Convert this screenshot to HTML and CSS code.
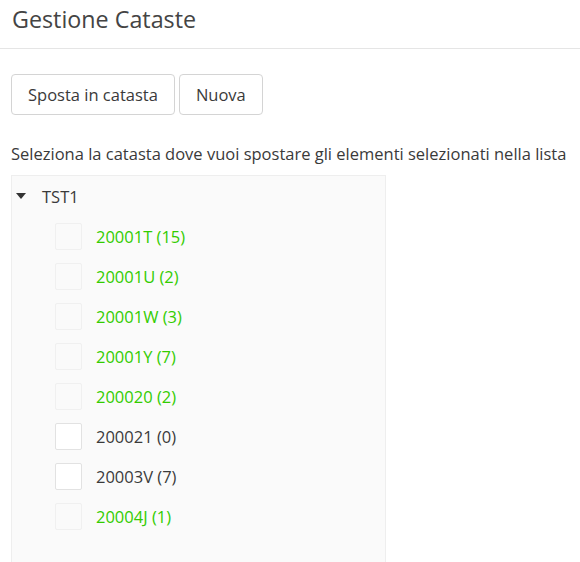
FILE: index.html
```html
<!DOCTYPE html>
<html lang="it">
<head>
<meta charset="utf-8">
<title>Gestione Cataste</title>
<link rel="stylesheet" href="styles.css">
</head>
<body>
<header class="page-header">
  <h1 class="title">Gestione Cataste</h1>
</header>
<main class="content">
  <div class="toolbar">
    <button class="btn">Sposta in catasta</button>
    <button class="btn">Nuova</button>
  </div>
  <p class="hint">Seleziona la catasta dove vuoi spostare gli elementi selezionati nella lista</p>
  <div class="tree">
    <div class="tree-root">
      <span class="caret"></span>
      <span class="root-label">TST1</span>
    </div>
    <ul class="tree-children">
      <li class="node node-ok"><span class="check"></span><span class="label">20001T (15)</span></li>
      <li class="node node-ok"><span class="check"></span><span class="label">20001U (2)</span></li>
      <li class="node node-ok"><span class="check"></span><span class="label">20001W (3)</span></li>
      <li class="node node-ok"><span class="check"></span><span class="label">20001Y (7)</span></li>
      <li class="node node-ok"><span class="check"></span><span class="label">200020 (2)</span></li>
      <li class="node"><span class="check"></span><span class="label">200021 (0)</span></li>
      <li class="node"><span class="check"></span><span class="label">20003V (7)</span></li>
      <li class="node node-ok"><span class="check"></span><span class="label">20004J (1)</span></li>
    </ul>
  </div>
</main>
</body>
</html>
```

FILE: styles.css
```css
* { box-sizing: border-box; }
html, body { margin: 0; padding: 0; background: #fff; }
body {
  font-family: "Segoe UI", "Open Sans", "Noto Sans", sans-serif;
  font-size: 16.5px;
  color: #3a3a3a;
  overflow: hidden;
  height: 562px;
}
.page-header {
  padding: 4px 12px 0;
  height: 49px;
  border-bottom: 1px solid #e5e5e5;
}
.title {
  margin: 0;
  font-size: 23.3px;
  font-weight: 400;
  line-height: 30px;
  color: #444;
}
.content { padding: 25px 11px 0; }
.toolbar { display: flex; gap: 4px; }
.btn {
  font: inherit;
  color: #3a3a3a;
  background: #fff;
  border: 1px solid #d4d4d4;
  border-radius: 4px;
  height: 41px;
  padding: 0 16px;
  line-height: 24px;
}
.hint { margin: 28px 0 10px; line-height: 22px; white-space: nowrap; }
.tree {
  width: 375px;
  height: 400px;
  background: #fafafa;
  border: 1px solid #eeeeee;
  border-bottom: none;
}
.tree-root {
  display: flex;
  align-items: center;
  height: 40px;
  padding-left: 4px;
}
.caret {
  width: 0; height: 0;
  border-left: 5px solid transparent;
  border-right: 5px solid transparent;
  border-top: 6px solid #333;
  margin-right: 16px;
}
.root-label { color: #3a3a3a; }
.tree-children { list-style: none; margin: 0; padding: 0 0 0 43px; }
.node { display: flex; align-items: center; height: 40px; gap: 14px; }
.check {
  width: 27px; height: 27px;
  border: 1px solid #e2e2e2;
  border-radius: 2px;
  background: #fff;
}
.node-ok .check { background: #fafafa; border-color: #f0f0f0; }
.label { color: #3a3a3a; }
.node-ok .label { color: #33cc00; }
```
